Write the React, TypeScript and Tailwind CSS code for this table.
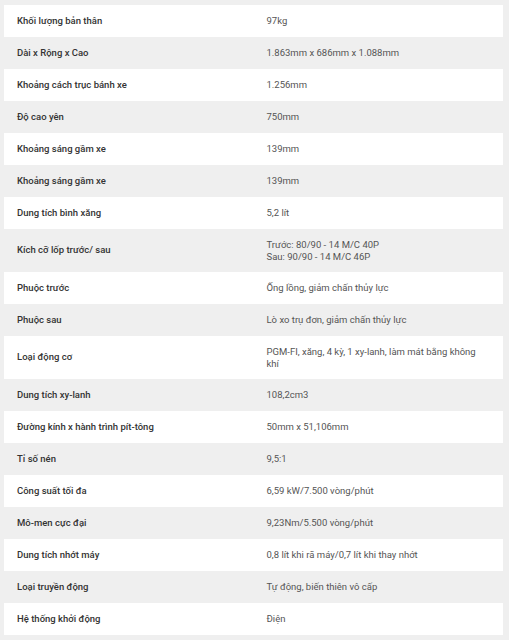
import React from 'react';

const specs: { label: string; value: string[] }[] = [
  { label: 'Khối lượng bản thân', value: ['97kg'] },
  { label: 'Dài x Rộng x Cao', value: ['1.863mm x 686mm x 1.088mm'] },
  { label: 'Khoảng cách trục bánh xe', value: ['1.256mm'] },
  { label: 'Độ cao yên', value: ['750mm'] },
  { label: 'Khoảng sáng gầm xe', value: ['139mm'] },
  { label: 'Khoảng sáng gầm xe', value: ['139mm'] },
  { label: 'Dung tích bình xăng', value: ['5,2 lít'] },
  { label: 'Kích cỡ lốp trước/ sau', value: ['Trước: 80/90 - 14 M/C 40P', 'Sau: 90/90 - 14 M/C 46P'] },
  { label: 'Phuộc trước', value: ['Ống lồng, giảm chấn thủy lực'] },
  { label: 'Phuộc sau', value: ['Lò xo trụ đơn, giảm chấn thủy lực'] },
  { label: 'Loại động cơ', value: ['PGM-FI, xăng, 4 kỳ, 1 xy-lanh, làm mát bằng không khí'] },
  { label: 'Dung tích xy-lanh', value: ['108,2cm3'] },
  { label: 'Đường kính x hành trình pít-tông', value: ['50mm x 51,106mm'] },
  { label: 'Tỉ số nén', value: ['9,5:1'] },
  { label: 'Công suất tối đa', value: ['6,59 kW/7.500 vòng/phút'] },
  { label: 'Mô-men cực đại', value: ['9,23Nm/5.500 vòng/phút'] },
  { label: 'Dung tích nhớt máy', value: ['0,8 lít khi rã máy/0,7 lít khi thay nhớt'] },
  { label: 'Loại truyền động', value: ['Tự động, biến thiên vô cấp'] },
  { label: 'Hệ thống khởi động', value: ['Điện'] },
];

export default function App() {
  return (
    <div className="w-[509px] h-[640px] bg-[#efefef] pt-[5px] pl-[4px] pr-[6px] font-['Roboto',sans-serif] overflow-hidden">
      {specs.map((row, i) => (
        <div
          key={i}
          className={`grid grid-cols-2 items-center ${row.value.length > 1 || row.value[0].length > 45 ? 'h-[43px]' : 'h-[32px]'} ${i % 2 === 0 ? 'bg-white' : 'bg-[#efefef]'}`}
        >
          <div className="pl-[13px] text-[9.5px] font-medium text-[#333]">{row.label}</div>
          <div className="pl-[13px] pr-[16px] text-[9.5px] leading-[12px] text-[#555]">
            {row.value.map((v, j) => (
              <div key={j}>{v}</div>
            ))}
          </div>
        </div>
      ))}
    </div>
  );
}
